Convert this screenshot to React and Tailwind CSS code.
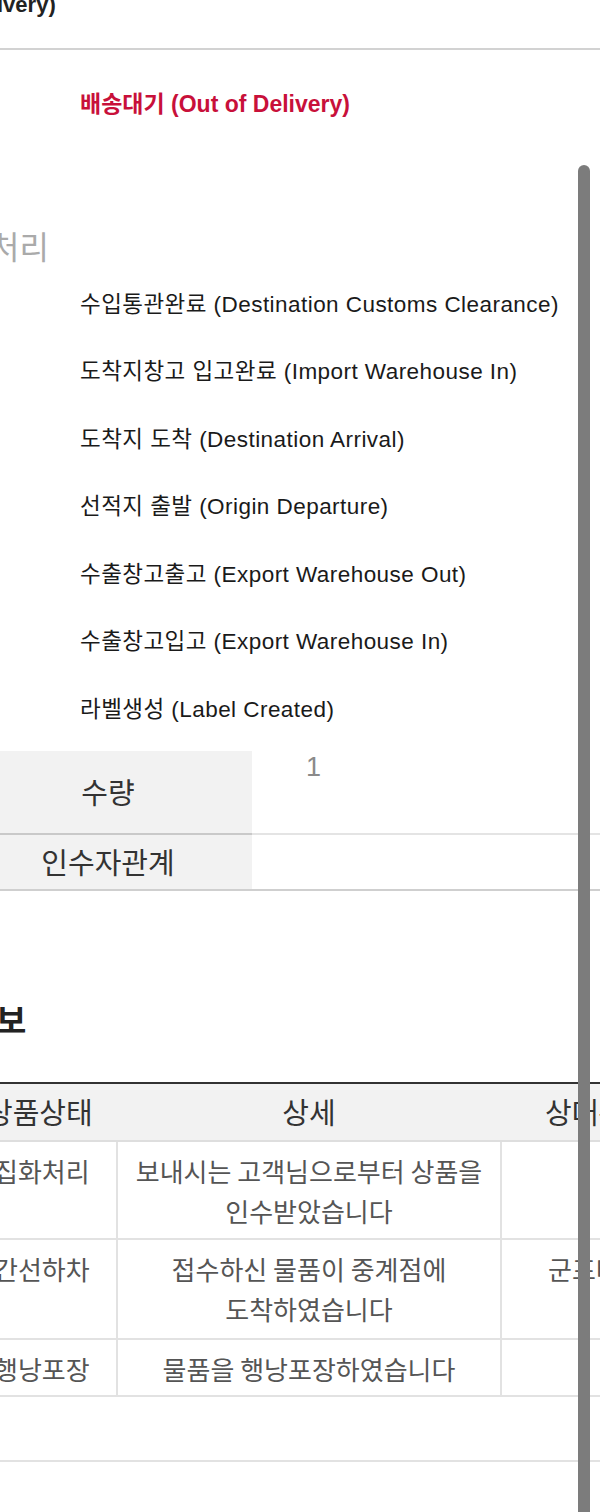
const steps = [
  '수입통관완료 (Destination Customs Clearance)',
  '도착지창고 입고완료 (Import Warehouse In)',
  '도착지 도착 (Destination Arrival)',
  '선적지 출발 (Origin Departure)',
  '수출창고출고 (Export Warehouse Out)',
  '수출창고입고 (Export Warehouse In)',
  '라벨생성 (Label Created)',
];

const history = [
  { status: '집화처리', detail: ['보내시는 고객님으로부터 상품을', '인수받았습니다'], place: '', h: 'h-[98px]' },
  { status: '간선하차', detail: ['접수하신 물품이 중계점에', '도착하였습니다'], place: '군포터미널', h: 'h-[100px]' },
  { status: '행낭포장', detail: ['물품을 행낭포장하였습니다'], place: '', h: 'h-[57px]' },
];

const arial = "font-['Liberation_Sans','Noto_Sans_CJK_KR',sans-serif]";
const kr = "font-['Noto_Sans_CJK_KR','Noto_Sans',sans-serif]";

export default function App() {
  return (
    <div className="relative w-[600px] h-[1512px] overflow-hidden bg-white">
      {/* tracking steps */}
      <div className={arial}>
        <div className="flex flex-col h-[50px] border-b-2 border-[#d2d2d2] overflow-hidden">
          <p className="mt-[-6px] ml-[-3px] text-[22px] font-bold text-[#222] leading-[22px]">ivery)</p>
        </div>
        <p className="pl-[80px] pt-[39px] text-[23px] font-bold leading-[30px] text-[#c8103a]">
          배송대기 (Out of Delivery)
        </p>
      </div>

      <p className={`${kr} mt-[106px] ml-[-10px] text-[32px] leading-[40px] text-[#aaaaaa]`}>처리</p>

      <ul className={`${arial} mt-[6px] pl-[80px] text-[22.5px] tracking-[0.45px] text-[#1a1a1a]`}>
        {steps.map((s) => (
          <li key={s} className="h-[67.5px] flex items-center whitespace-nowrap">{s}</li>
        ))}
      </ul>

      {/* info table */}
      <div className={`${kr} mt-[7px] text-[29px] text-[#333]`}>
        <div className="flex h-[84px] border-b-2 border-[#e4e4e4]">
          <div className="w-[252px] shrink-0 bg-[#f2f2f2] border-b-2 border-[#c9c9c9] mb-[-2px] flex items-center justify-center">
            <span className="mr-[36px]">수량</span>
          </div>
          <div className={`${arial} flex-1 pl-[54px] pt-[1px] text-[27px] leading-[30px] text-[#8a8a8a]`}>1</div>
        </div>
        <div className="flex h-[56px] border-b-2 border-[#cfcfcf]">
          <div className="w-[252px] shrink-0 bg-[#f2f2f2] flex items-center justify-center">
            <span className="mr-[36px]">인수자관계</span>
          </div>
          <div className="flex-1" />
        </div>
      </div>

      <h2 className={`${kr} mt-[108px] ml-[-4px] text-[33px] font-bold leading-[40px] text-[#222]`}>보</h2>

      {/* history table */}
      <div className={`${kr} mt-[43px] border-t-2 border-[#333] text-[26px] text-[#555]`}>
        <div className="flex h-[58px] bg-[#f2f2f2] border-b-2 border-[#dedede] text-[29px] text-[#333] items-center">
          <div className="w-[116px] shrink-0 whitespace-nowrap">
            <span className="ml-[-14px]">상품상태</span>
          </div>
          <div className="w-[386px] shrink-0 text-center">상세</div>
          <div className="flex-1 pl-[43px] whitespace-nowrap">상대위치</div>
        </div>
        {history.map((r) => (
          <div key={r.status} className={`flex ${r.h} border-b-2 border-[#e2e2e2]`}>
            <div className="w-[116px] shrink-0 pt-[9px] leading-[40px] whitespace-nowrap">
              <span className="ml-[-6px]">{r.status}</span>
            </div>
            <div className="w-[386px] shrink-0 border-x-2 border-[#e2e2e2] pt-[9px] text-center leading-[40px]">
              {r.detail.map((d) => (
                <div key={d}>{d}</div>
              ))}
            </div>
            <div className="flex-1 pl-[46px] pt-[9px] leading-[40px] whitespace-nowrap">{r.place}</div>
          </div>
        ))}
        <div className="h-[65px] border-b-2 border-[#e2e2e2]" />
      </div>

      {/* scrollbar */}
      <div className="absolute left-[578px] top-[165px] w-[12px] h-[1400px] rounded-t-full bg-[#7c7c7c]" />
    </div>
  );
}
